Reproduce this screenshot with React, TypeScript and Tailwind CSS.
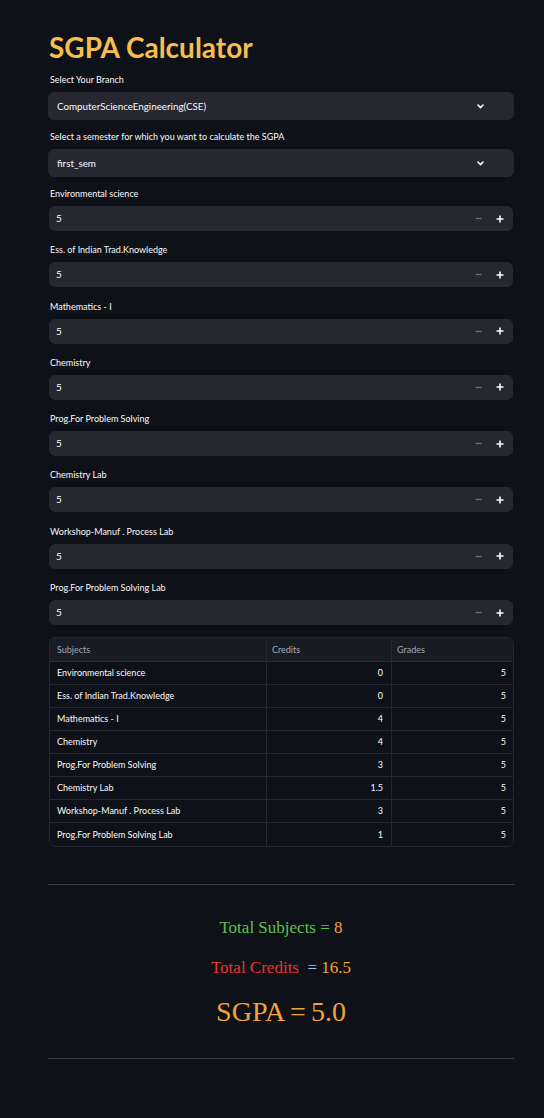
import React from "react";

const subjects: { name: string; credits: string }[] = [
  { name: "Environmental science", credits: "0" },
  { name: "Ess. of Indian Trad.Knowledge", credits: "0" },
  { name: "Mathematics - I", credits: "4" },
  { name: "Chemistry", credits: "4" },
  { name: "Prog.For Problem Solving", credits: "3" },
  { name: "Chemistry Lab", credits: "1.5" },
  { name: "Workshop-Manuf . Process Lab", credits: "3" },
  { name: "Prog.For Problem Solving Lab", credits: "1" },
];

function Chevron() {
  return (
    <svg width="7" height="5" viewBox="0 0 7 5" fill="none">
      <path d="M1 1 L3.5 3.6 L6 1" stroke="#fafafa" strokeWidth="1.6" strokeLinecap="round" strokeLinejoin="round" />
    </svg>
  );
}

function SelectBox({ label, value }: { label: string; value: string }) {
  return (
    <div className="flex flex-col">
      <div className="h-[14px] leading-[14px] text-[9px] text-[#fafafa] pl-[2px]">{label}</div>
      <div className="mt-[5px] h-[28px] rounded-[6px] bg-[#262730] flex items-center justify-between pl-[9px] pr-[30px]">
        <span className="text-[9.8px] text-[#fafafa]">{value}</span>
        <Chevron />
      </div>
    </div>
  );
}

function NumberBox({ label }: { label: string }) {
  return (
    <div className="flex flex-col">
      <div className="h-[14px] leading-[14px] text-[9px] text-[#fafafa] pl-[2px]">{label}</div>
      <div className="mt-[5px] h-[25px] rounded-[6px] bg-[#262730] flex items-center justify-between pl-[7px] pr-[9px] ml-[1px] mr-[1px]">
        <span className="text-[10px] text-[#fafafa]">5</span>
        <div className="flex items-center gap-[14px]">
          <svg width="7" height="7" viewBox="0 0 7 7">
            <path d="M0.5 3.5 H6.5" stroke="#6b6d78" strokeWidth="1.4" />
          </svg>
          <svg width="8" height="8" viewBox="0 0 8 8">
            <path d="M0.5 4 H7.5 M4 0.5 V7.5" stroke="#fafafa" strokeWidth="1.6" />
          </svg>
        </div>
      </div>
    </div>
  );
}

export default function App() {
  return (
    <div
      className="min-h-[1118px] w-[544px] bg-[#0e1117] text-[#fafafa]"
      style={{ fontFamily: 'Lato, "Open Sans", sans-serif' }}
    >
      <div className="ml-[48px] w-[466px] pt-[27px] pb-[54px]">
        <h1 className="text-[28px] leading-[40px] font-bold text-[#f5bf50] pl-[1px]">SGPA Calculator</h1>
        <div className="mt-[6px] flex flex-col gap-[10px]">
          <SelectBox label="Select Your Branch" value="ComputerScienceEngineering(CSE)" />
          <SelectBox label="Select a semester for which you want to calculate the SGPA" value="first_sem" />
        </div>
        <div className="mt-[10px] flex flex-col gap-[12.3px]">
          {subjects.map((s) => (
            <NumberBox key={s.name} label={s.name} />
          ))}
        </div>
        <div className="mt-[12px] ml-[1px] rounded-[6px] border border-[#26272e] overflow-hidden text-[9px]">
          <div className="grid grid-cols-[217px_125px_1fr] h-[24px] bg-[#1a1c24] border-b border-[#2b2c33] text-[#a3a8b4]">
            <div className="flex items-center pl-[7px] border-r border-[#26272e]">Subjects</div>
            <div className="flex items-center pl-[5px] border-r border-[#26272e]">Credits</div>
            <div className="flex items-center pl-[5px]">Grades</div>
          </div>
          {subjects.map((s, i) => (
            <div
              key={s.name}
              className={
                "grid grid-cols-[217px_125px_1fr] h-[23px] bg-[#0e1117] " +
                (i < subjects.length - 1 ? "border-b border-[#26272e]" : "")
              }
            >
              <div className="flex items-center pl-[7px] border-r border-[#26272e]">{s.name}</div>
              <div className="flex items-center justify-end pr-[8px] border-r border-[#26272e]">{s.credits}</div>
              <div className="flex items-center justify-end pr-[7px]">5</div>
            </div>
          ))}
        </div>
        <div className="mt-[37px] h-px bg-[#3b3d44]" />
        <div
          className="flex flex-col items-center"
          style={{ fontFamily: '"Liberation Serif", "Times New Roman", serif' }}
        >
          <div className="mt-[31px] text-[17px] leading-[24px]">
            <span className="text-[#5cc24e]">Total Subjects</span>
            <span className="text-[#5cc24e]"> = </span>
            <span className="text-[#f2a23a]">8</span>
          </div>
          <div className="mt-[16px] text-[17px] leading-[24px]">
            <span className="text-[#e8342b]">Total Credits</span>
            <span className="text-[#8ec6ee]">&nbsp; = </span>
            <span className="text-[#f2a23a]">16.5</span>
          </div>
          <div className="mt-[13px] text-[28px] leading-[38px] text-[#f2a23a]">
            SGPA<span className="mx-[5px]">=</span>5.0
          </div>
        </div>
        <div className="mt-[27px] h-px bg-[#3b3d44]" />
      </div>
    </div>
  );
}
